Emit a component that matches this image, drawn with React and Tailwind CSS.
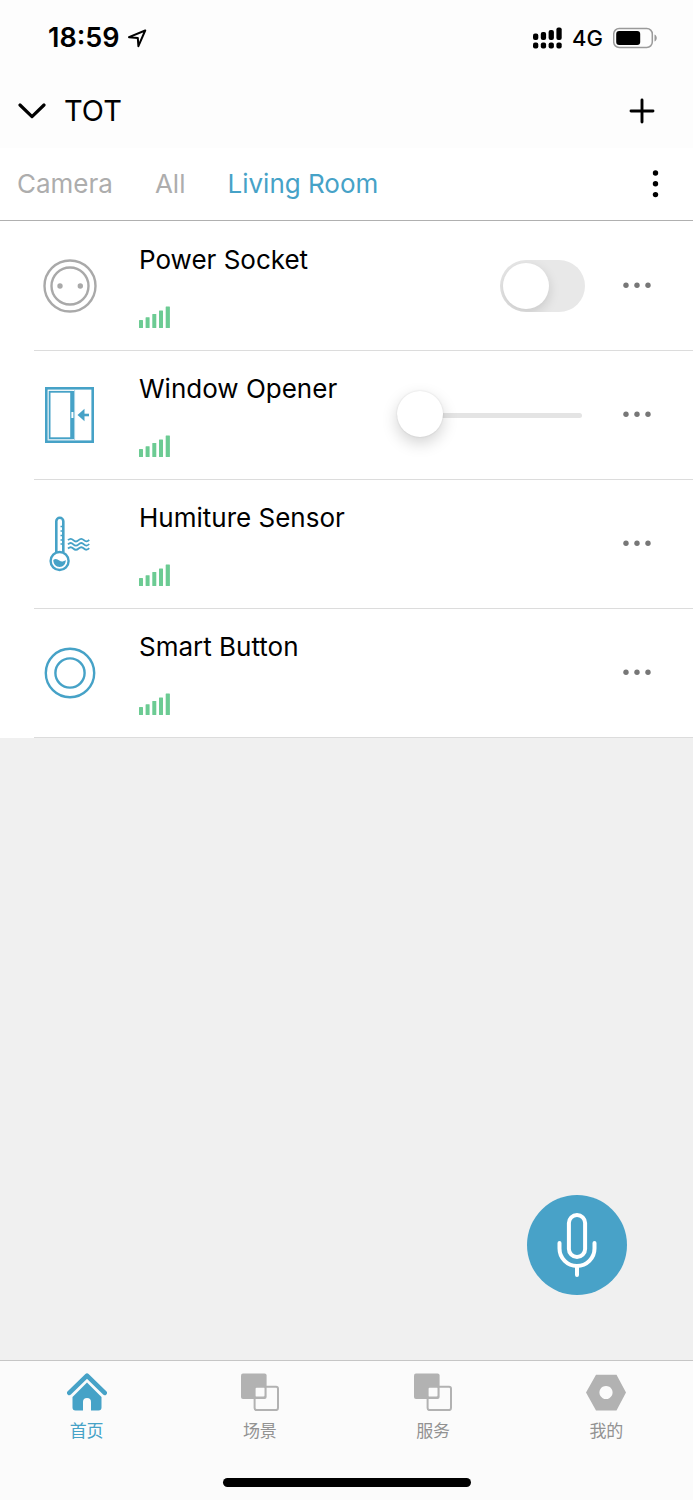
import React, { useState } from 'react'

const ROOMS = ['Camera', 'All', 'Living Room']

function SocketIcon() {
  return (
    <svg width="54" height="54" viewBox="0 0 54 54" fill="none" stroke="#a9a9a9" strokeWidth="2.4" aria-hidden="true">
      <circle cx="27" cy="27" r="25.5" />
      <circle cx="27" cy="27" r="18.5" />
      <circle cx="17" cy="27" r="2.7" fill="#a9a9a9" stroke="none" />
      <circle cx="37.3" cy="27" r="2.7" fill="#a9a9a9" stroke="none" />
    </svg>
  )
}

function WindowIcon() {
  return (
    <svg width="50" height="56" viewBox="0 0 50 56" fill="none" stroke="#46a2c7" aria-hidden="true">
      <rect x="1.3" y="1.3" width="46.4" height="53.4" strokeWidth="2.6" />
      <rect x="4.6" y="4.8" width="22" height="46.4" strokeWidth="1.8" />
      <path d="M27.3 4v48" strokeWidth="4" />
      <path d="M29.6 3v50M3 53h27" stroke="#9ccde1" strokeWidth="0.8" />
      <rect x="26.4" y="25" width="2" height="6" fill="#fff" stroke="none" />
      <path d="M38 28h6" strokeWidth="2.6" />
      <path d="M32.5 28l7-6.2v12.4z" fill="#46a2c7" stroke="none" />
    </svg>
  )
}

function ThermometerIcon() {
  return (
    <svg width="42" height="56" viewBox="0 0 42 56" fill="none" stroke="#46a2c7" strokeWidth="2" aria-hidden="true">
      <path d="M7.3 36V5.3a3.5 3.5 0 0 1 7 0V36" strokeWidth="2.6" />
      <circle cx="10.6" cy="45" r="9" strokeWidth="2.4" />
      <path d="M11.5 10.5h2.5M11.5 15h2.5M11.5 19.500h2.5M11.5 24h2.5M11.5 28h2.5" strokeWidth="1.5" />
      <path d="M4.3 44c2-1.6 4-1 6 .5s4 1.3 6.500-.5c0 4-2.5 7-6.2 7s-6.3-3-6.3-7z" fill="#46a2c7" stroke="none" />
      <path d="M19 24.2q2.700-2.600 5.300 0t5.300 0 5.300 0 5.300-.3M19 28.3q2.700-2.600 5.300 0t5.300 0 5.300 0 5.300-.3M19 32.5q2.700-2.600 5.300 0t5.300 0 5.300 0 5.300-.3" strokeWidth="1.8" />
    </svg>
  )
}

function ButtonIcon() {
  return (
    <svg width="52" height="52" viewBox="0 0 52 52" fill="none" stroke="#46a2c7" strokeWidth="2.4" aria-hidden="true">
      <circle cx="26" cy="26" r="24.2" />
      <circle cx="26" cy="26" r="14.6" />
    </svg>
  )
}

function SignalBars() {
  return (
    <svg width="32" height="22" viewBox="0 0 32 22" fill="#6ccb93" role="img" aria-label="Signal strength: full">
      <rect x="0" y="14" width="4" height="8" rx="0.5" />
      <rect x="6.6" y="11.3" width="4" height="10.7" rx="0.5" />
      <rect x="13.3" y="8" width="4" height="14" rx="0.5" />
      <rect x="20" y="4.5" width="4" height="17.5" rx="0.5" />
      <rect x="26.7" y="0.5" width="4.2" height="21.5" rx="0.5" />
    </svg>
  )
}

function HomeIcon() {
  return (
    <svg width="40" height="38" viewBox="0 0 40 38" aria-hidden="true">
      <path d="M20 9.500L5.500 24v10.500A3 3 0 0 0 8.500 37.500h7.500V29a4 4 0 0 1 8 0v8.500h7.500a3 3 0 0 0 3-3V24z" fill="currentColor" />
      <path d="M2.300 19.800L20 2.700l17.700 17.100" fill="none" stroke="currentColor" strokeWidth="4.6" strokeLinecap="round" strokeLinejoin="round" />
    </svg>
  )
}

function LayersIcon() {
  return (
    <svg width="40" height="38" viewBox="0 0 40 38" aria-hidden="true">
      <rect x="1" y="0.400" width="25.6" height="25.6" rx="2" fill="#b2b2b2" />
      <rect x="15" y="14" width="9.5" height="9.5" rx="1" fill="#fbfbfb" />
      <rect x="14.6" y="13.7" width="23.4" height="23.4" rx="2" fill="none" stroke="#b2b2b2" strokeWidth="2" />
    </svg>
  )
}

function HexIcon() {
  return (
    <svg width="40" height="38" viewBox="0 0 40 38" aria-hidden="true">
      <path fillRule="evenodd" d="M10 1.700h20.500L40 19.600 30.500 37.400H10L0 19.600zM20 12.900a6.600 6.600 0 1 0 .010 0z" fill="#b2b2b2" />
    </svg>
  )
}

function StatusBar() {
  return (
    <div className="flex h-[76px] items-center justify-between pr-9 pl-12 text-black">
      <div className="flex items-center gap-2">
        <span className="text-[27px] leading-8 font-semibold">18:59</span>
        <svg width="19" height="19" viewBox="0 0 19 19" fill="none" stroke="#000" strokeWidth="2" strokeLinejoin="round" aria-hidden="true">
          <path d="M17.2 1.500L1 8.200l8.800.7.600 8.300z" />
        </svg>
      </div>
      <div className="flex items-center gap-[10px]">
        <svg width="29" height="22" viewBox="0 0 29 22" aria-hidden="true">
          <rect x="0" y="6.5" width="5.3" height="6.5" rx="2" />
          <rect x="7.8" y="5" width="5.3" height="8" rx="2" />
          <rect x="15.6" y="3" width="5.3" height="10" rx="2" />
          <rect x="23.4" y="0.5" width="5.3" height="12.5" rx="2" />
          <rect x="0" y="15.5" width="5.3" height="6" rx="2" />
          <rect x="7.8" y="15.5" width="5.3" height="6" rx="2" />
          <rect x="15.6" y="15.5" width="5.3" height="6" rx="2" />
          <rect x="23.4" y="15.5" width="5.3" height="6" rx="2" />
        </svg>
        <span className="text-[22px] leading-8 font-medium">4G</span>
        <svg width="44" height="22" viewBox="0 0 44 22" aria-hidden="true">
          <rect x="0.7" y="1.5" width="38.6" height="19" rx="5.5" fill="none" stroke="#9a9a9a" strokeWidth="1.5" />
          <rect x="3.2" y="4" width="24" height="14" rx="3" />
          <path d="M41.500 7.500c3 1.200 3 5.800 0 7z" fill="#9a9a9a" />
        </svg>
      </div>
    </div>
  )
}

function DeviceRow({ name, icon, children }) {
  return (
    <li className="ml-[34px] flex h-[129px] items-center border-b border-[#dcdcdc] pr-[42px]">
      <div className="flex w-[71px] shrink-0 justify-center">{icon}</div>
      <div className="ml-[34px] flex flex-1 flex-col gap-[30px]">
        <span className="text-[26px] leading-8 whitespace-nowrap">{name}</span>
        <SignalBars />
      </div>
      {children}
      <button type="button" aria-label={`${name} options`} className="ml-[38px]">
        <svg width="28" height="28" viewBox="0 0 28 28" fill="#777" aria-hidden="true">
          <circle cx="3" cy="13.3" r="2.7" />
          <circle cx="14" cy="13.3" r="2.7" />
          <circle cx="25" cy="13.3" r="2.7" />
        </svg>
      </button>
    </li>
  )
}

function NavItem({ label, icon, active }) {
  return (
    <a
      href="#"
      aria-current={active ? 'page' : undefined}
      className={`flex flex-1 flex-col items-center gap-2 pt-3 ${active ? 'text-[#46a2c7]' : 'text-[#929292]'}`}
    >
      {icon}
      <span className="text-[17px] leading-6">{label}</span>
    </a>
  )
}

function App() {
  const [room, setRoom] = useState('Living Room')
  const [power, setPower] = useState(false)
  const [opening, setOpening] = useState(0)

  return (
    <div className="flex min-h-screen flex-col bg-[#f0f0f0] font-[Inter,'Noto_Sans_CJK_SC',sans-serif] text-black">
      <header className="bg-[#fdfdfd]">
        <StatusBar />
        <div className="flex h-[72px] items-center justify-between pr-[38px] pb-[2px] pl-[18px]">
          <button type="button" className="flex items-center gap-[18px]">
            <svg width="28" height="16" viewBox="0 0 28 16" fill="none" stroke="#000" strokeWidth="3.2" strokeLinecap="round" strokeLinejoin="round" aria-hidden="true">
              <path d="M2 2l12 11.600L26 2" />
            </svg>
            <span className="text-[29px] leading-9">TOT</span>
          </button>
          <button type="button" aria-label="Add device">
            <svg width="26" height="26" viewBox="0 0 26 26" fill="none" stroke="#000" strokeWidth="2.9" strokeLinecap="round" aria-hidden="true">
              <path d="M13 2v22M2 13h22" />
            </svg>
          </button>
        </div>
      </header>

      <div className="flex h-[73px] items-center justify-between border-b border-[#b0b0b0] bg-white pr-[34px] pl-[17px]">
        <nav className="flex gap-[42px] text-[26px] leading-8">
          {ROOMS.map((r) => (
            <button
              key={r}
              type="button"
              onClick={() => setRoom(r)}
              className={r === room ? 'text-[#46a2c7]' : 'text-[#adadad]'}
            >
              {r}
            </button>
          ))}
        </nav>
        <button type="button" aria-label="More">
          <svg width="7" height="28" viewBox="0 0 7 28" aria-hidden="true">
            <circle cx="3.5" cy="3" r="2.7" />
            <circle cx="3.5" cy="13.8" r="2.7" />
            <circle cx="3.5" cy="24.6" r="2.7" />
          </svg>
        </button>
      </div>

      <main className="relative flex-1">
        <ul className="bg-white pt-px">
          <DeviceRow name="Power Socket" icon={<SocketIcon />}>
            <input
              type="checkbox"
              role="switch"
              aria-label="Power Socket"
              checked={power}
              onChange={(e) => setPower(e.target.checked)}
              className="flex h-[52px] w-[85px] appearance-none items-center overflow-hidden rounded-full bg-[#e8e8e8] p-[3px] before:size-[46px] before:rounded-full before:bg-white before:shadow-[0_4px_12px_rgba(0,0,0,0.14)] before:content-[''] checked:justify-end checked:bg-[#46a2c7]"
            />
          </DeviceRow>
          <DeviceRow name="Window Opener" icon={<WindowIcon />}>
            <input
              type="range"
              aria-label="Window Opener"
              min="0"
              max="100"
              value={opening}
              onChange={(e) => setOpening(Number(e.target.value))}
              className="mr-[3px] h-[46px] w-[185px] appearance-none bg-transparent [&::-webkit-slider-runnable-track]:h-[5px] [&::-webkit-slider-runnable-track]:rounded-full [&::-webkit-slider-runnable-track]:bg-[#e4e4e4] [&::-webkit-slider-thumb]:-mt-[22px] [&::-webkit-slider-thumb]:size-[46px] [&::-webkit-slider-thumb]:appearance-none [&::-webkit-slider-thumb]:rounded-full [&::-webkit-slider-thumb]:bg-white [&::-webkit-slider-thumb]:shadow-[0_6px_16px_rgba(0,0,0,0.18),0_0_2px_rgba(0,0,0,0.12)]"
            />
          </DeviceRow>
          <DeviceRow name="Humiture Sensor" icon={<ThermometerIcon />} />
          <DeviceRow name="Smart Button" icon={<ButtonIcon />} />
        </ul>

        <button
          type="button"
          aria-label="Voice control"
          className="absolute right-[66px] bottom-[65px] flex size-[100px] items-center justify-center rounded-full bg-[#48a2c8]"
        >
          <svg width="40" height="64" viewBox="0 0 40 64" fill="none" stroke="#fff" strokeWidth="4" strokeLinecap="round" aria-hidden="true">
            <rect x="11.9" y="2" width="16.2" height="42" rx="8.1" />
            <path d="M2.500 30v5.500a17.500 17.500 0 0 0 35 0V30M20 54v8" />
          </svg>
        </button>
      </main>

      <footer className="flex h-[140px] flex-col justify-between border-t border-[#c6c6c6] bg-[#fbfbfb] pb-[13px]">
        <nav className="flex">
          <NavItem label="首页" icon={<HomeIcon />} active />
          <NavItem label="场景" icon={<LayersIcon />} />
          <NavItem label="服务" icon={<LayersIcon />} />
          <NavItem label="我的" icon={<HexIcon />} />
        </nav>
        <div className="h-[9px] w-[248px] self-center rounded-full bg-black" />
      </footer>
    </div>
  )
}

export default App
